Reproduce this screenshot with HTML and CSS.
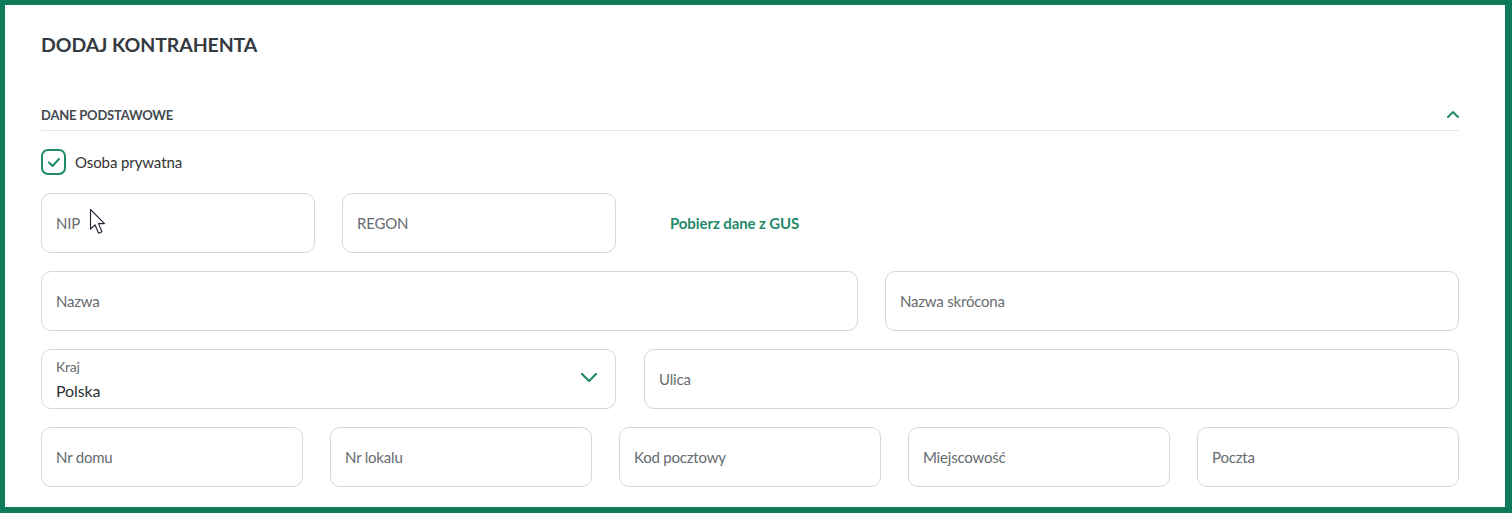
FILE: index.html
```html
<!DOCTYPE html>
<html lang="pl">
<head>
<meta charset="utf-8">
<title>Dodaj kontrahenta</title>
<link rel="stylesheet" href="styles.css">
</head>
<body>
<div class="frame">
  <h1 class="title">DODAJ KONTRAHENTA</h1>
  <div class="section-head">
    <span class="section-title">DANE PODSTAWOWE</span>
    <svg class="chev-up" width="14" height="9" viewBox="0 0 14 9"><path d="M2 7 L7 2 L12 7" fill="none" stroke="#1f8a6a" stroke-width="2" stroke-linecap="round" stroke-linejoin="round"/></svg>
  </div>
  <label class="check-row">
    <span class="checkbox">
      <svg width="14" height="11" viewBox="0 0 14 11"><path d="M2 5.5 L5.5 9 L12 2" fill="none" stroke="#1f8a6a" stroke-width="2" stroke-linecap="round" stroke-linejoin="round"/></svg>
    </span>
    <span class="check-label">Osoba prywatna</span>
  </label>

  <div class="row">
    <div class="field w274 nip"><span class="ph">NIP</span>
      <svg class="cursor" width="18" height="28" viewBox="0 0 18 28"><path d="M1.5 1.5 L1.5 21 L6 16.8 L9.6 25.2 L13 23.8 L9.5 15.6 L15.5 15.6 Z" fill="#fff" stroke="#1d2430" stroke-width="1.1" stroke-linejoin="round"/></svg>
    </div>
    <div class="field w274"><span class="ph">REGON</span></div>
    <a class="gus" href="#">Pobierz dane z GUS</a>
  </div>

  <div class="row">
    <div class="field grow"><span class="ph">Nazwa</span></div>
    <div class="field w574"><span class="ph">Nazwa skrócona</span></div>
  </div>

  <div class="row row-wide">
    <div class="field w575 select">
      <div class="sel-text">
        <span class="sel-label">Kraj</span>
        <span class="sel-value">Polska</span>
      </div>
      <svg class="chev-down" width="18" height="11" viewBox="0 0 18 11"><path d="M2 2 L9 9 L16 2" fill="none" stroke="#1f8a6a" stroke-width="2.2" stroke-linecap="round" stroke-linejoin="round"/></svg>
    </div>
    <div class="field grow"><span class="ph">Ulica</span></div>
  </div>

  <div class="row">
    <div class="field eq"><span class="ph">Nr domu</span></div>
    <div class="field eq"><span class="ph">Nr lokalu</span></div>
    <div class="field eq"><span class="ph">Kod pocztowy</span></div>
    <div class="field eq"><span class="ph">Miejscowość</span></div>
    <div class="field eq"><span class="ph">Poczta</span></div>
  </div>
</div>
</body>
</html>
```

FILE: styles.css
```css
* { box-sizing: border-box; }
html, body { margin: 0; padding: 0; background: #fff; }
body { font-family: Lato, "Open Sans", "Liberation Sans", sans-serif; color: #333; }

.frame {
  width: 1512px;
  height: 513px;
  border-style: solid;
  border-color: #0f7a5a;
  border-width: 5px 7px 6px 5px;
  padding: 28px 46px 0 36px;
  overflow: hidden;
  background: #fff;
}

.title {
  margin: 0;
  font-size: 19.5px;
  line-height: 24px;
  font-weight: 700;
  color: #343a40;
  letter-spacing: -0.1px;
}

.section-head {
  margin-top: 50px;
  display: flex;
  align-items: center;
  justify-content: space-between;
  padding-bottom: 7px;
  border-bottom: 1px solid #e6e6e6;
  height: 24px;
}
.section-title {
  font-size: 13px;
  line-height: 16px;
  font-weight: 700;
  color: #444a50;
  letter-spacing: -0.2px;
}
.chev-up { margin-right: -1px; margin-top: -2px; }

.check-row {
  margin-top: 18px;
  display: flex;
  align-items: center;
  gap: 9px;
  height: 26px;
}
.checkbox {
  width: 25px;
  height: 26px;
  border: 2px solid #1f8a6a;
  border-radius: 7px;
  display: flex;
  align-items: center;
  justify-content: center;
}
.check-label {
  font-size: 15px;
  color: #333;
  letter-spacing: -0.1px;
}

.row {
  display: flex;
  gap: 27px;
  margin-top: 18px;
  align-items: center;
}
.row-wide { gap: 28px; }

.field {
  height: 60px;
  border: 1px solid #d6d6d6;
  border-radius: 10px;
  display: flex;
  align-items: center;
  padding: 0 14px;
  position: relative;
  background: #fff;
}
.w274 { width: 274px; flex: none; }
.w574 { width: 574px; flex: none; }
.w575 { width: 575px; flex: none; }
.grow { flex: 1; }
.eq { flex: 1; }

.ph {
  font-size: 15px;
  color: #666c70;
  letter-spacing: -0.2px;
}

.cursor {
  position: absolute;
  left: 47px;
  top: 14px;
}

.gus {
  margin-left: 27px;
  font-size: 15px;
  font-weight: 700;
  color: #1f8a6a;
  text-decoration: none;
  letter-spacing: -0.1px;
}

.select { justify-content: space-between; padding-right: 17px; }
.sel-text { display: flex; flex-direction: column; }
.sel-label { font-size: 14px; line-height: 17px; color: #666c70; margin-top: 0; letter-spacing: -0.2px; }
.sel-value { font-size: 16px; line-height: 20px; color: #2b2f33; margin-top: 6px; letter-spacing: -0.1px; }
.chev-down { margin-top: -3px; }
```
